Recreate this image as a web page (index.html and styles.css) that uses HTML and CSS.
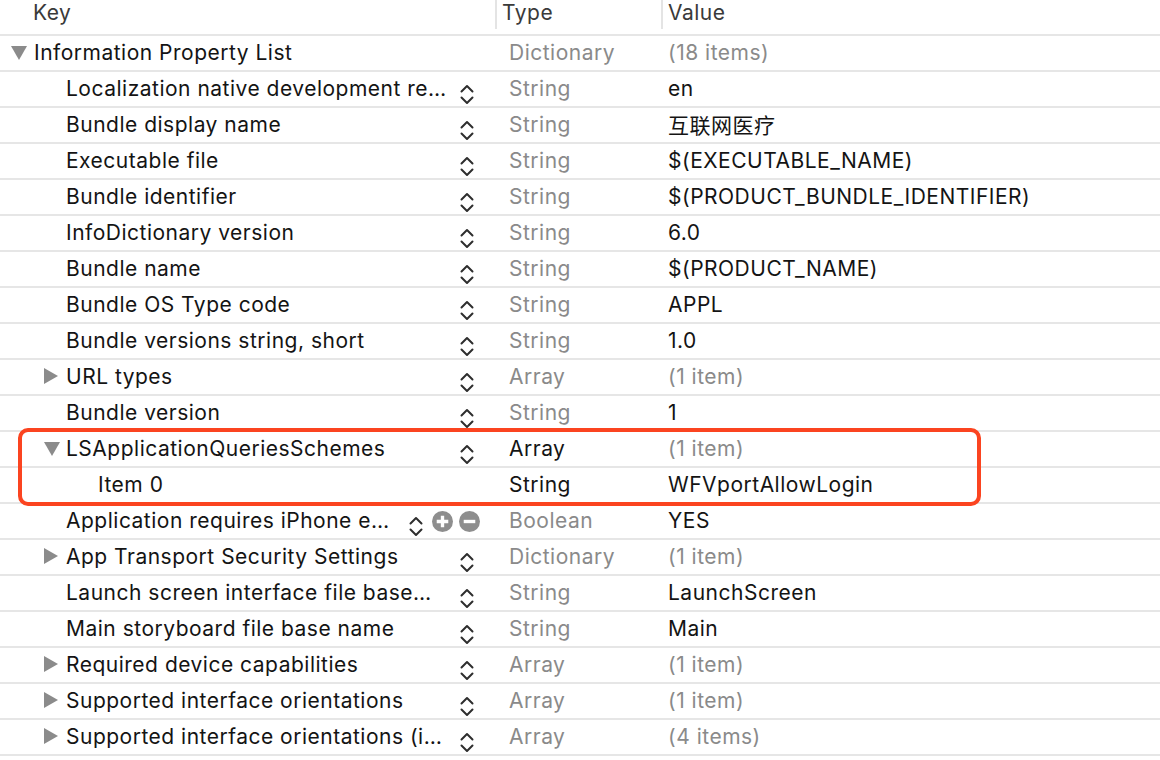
FILE: index.html
```html
<!DOCTYPE html>
<html>
<head>
<meta charset="utf-8">
<link rel="stylesheet" href="styles.css">
</head>
<body>
<div class="plist">
  <div class="row head">
    <div class="c key"><span class="htext hk">Key</span></div>
    <div class="c type"><span class="htext ht">Type</span></div>
    <div class="c value"><span class="htext hv">Value</span></div>
  </div>

  <div class="row">
    <div class="c key d0"><span class="tri down"></span><span class="k">Information Property List</span></div>
    <div class="c type">Dictionary</div>
    <div class="c value dim">(18 items)</div>
  </div>

  <div class="row">
    <div class="c key d1"><span class="k">Localization native development re…</span><svg class="step" viewBox="0 0 14 22"><path d="M1.5 8.5 7 3l5.5 5.5M1.5 14.5 7 20l5.5-5.5"/></svg></div>
    <div class="c type">String</div>
    <div class="c value">en</div>
  </div>
  <div class="row">
    <div class="c key d1"><span class="k">Bundle display name</span><svg class="step" viewBox="0 0 14 22"><path d="M1.5 8.5 7 3l5.5 5.5M1.5 14.5 7 20l5.5-5.5"/></svg></div>
    <div class="c type">String</div>
    <div class="c value">互联网医疗</div>
  </div>
  <div class="row">
    <div class="c key d1"><span class="k">Executable file</span><svg class="step" viewBox="0 0 14 22"><path d="M1.5 8.5 7 3l5.5 5.5M1.5 14.5 7 20l5.5-5.5"/></svg></div>
    <div class="c type">String</div>
    <div class="c value">$(EXECUTABLE_NAME)</div>
  </div>
  <div class="row">
    <div class="c key d1"><span class="k">Bundle identifier</span><svg class="step" viewBox="0 0 14 22"><path d="M1.5 8.5 7 3l5.5 5.5M1.5 14.5 7 20l5.5-5.5"/></svg></div>
    <div class="c type">String</div>
    <div class="c value">$(PRODUCT_BUNDLE_IDENTIFIER)</div>
  </div>
  <div class="row">
    <div class="c key d1"><span class="k">InfoDictionary version</span><svg class="step" viewBox="0 0 14 22"><path d="M1.5 8.5 7 3l5.5 5.5M1.5 14.5 7 20l5.5-5.5"/></svg></div>
    <div class="c type">String</div>
    <div class="c value">6.0</div>
  </div>
  <div class="row">
    <div class="c key d1"><span class="k">Bundle name</span><svg class="step" viewBox="0 0 14 22"><path d="M1.5 8.5 7 3l5.5 5.5M1.5 14.5 7 20l5.5-5.5"/></svg></div>
    <div class="c type">String</div>
    <div class="c value">$(PRODUCT_NAME)</div>
  </div>
  <div class="row">
    <div class="c key d1"><span class="k">Bundle OS Type code</span><svg class="step" viewBox="0 0 14 22"><path d="M1.5 8.5 7 3l5.5 5.5M1.5 14.5 7 20l5.5-5.5"/></svg></div>
    <div class="c type">String</div>
    <div class="c value">APPL</div>
  </div>
  <div class="row">
    <div class="c key d1"><span class="k">Bundle versions string, short</span><svg class="step" viewBox="0 0 14 22"><path d="M1.5 8.5 7 3l5.5 5.5M1.5 14.5 7 20l5.5-5.5"/></svg></div>
    <div class="c type">String</div>
    <div class="c value">1.0</div>
  </div>
  <div class="row">
    <div class="c key d1"><span class="tri right"></span><span class="k">URL types</span><svg class="step" viewBox="0 0 14 22"><path d="M1.5 8.5 7 3l5.5 5.5M1.5 14.5 7 20l5.5-5.5"/></svg></div>
    <div class="c type">Array</div>
    <div class="c value dim">(1 item)</div>
  </div>
  <div class="row">
    <div class="c key d1"><span class="k">Bundle version</span><svg class="step" viewBox="0 0 14 22"><path d="M1.5 8.5 7 3l5.5 5.5M1.5 14.5 7 20l5.5-5.5"/></svg></div>
    <div class="c type">String</div>
    <div class="c value">1</div>
  </div>

  <div class="group">
    <div class="row">
      <div class="c key d1"><span class="tri down"></span><span class="k">LSApplicationQueriesSchemes</span><svg class="step" viewBox="0 0 14 22"><path d="M1.5 8.5 7 3l5.5 5.5M1.5 14.5 7 20l5.5-5.5"/></svg></div>
      <div class="c type strong">Array</div>
      <div class="c value dim">(1 item)</div>
    </div>
    <div class="row">
      <div class="c key d2"><span class="k">Item 0</span></div>
      <div class="c type strong">String</div>
      <div class="c value">WFVportAllowLogin</div>
    </div>
    <div class="mark"></div>
  </div>

  <div class="row">
    <div class="c key d1"><span class="k">Application requires iPhone e…</span><svg class="step tight" viewBox="0 0 14 22"><path d="M1.5 8.5 7 3l5.5 5.5M1.5 14.5 7 20l5.5-5.5"/></svg><svg class="btn" width="21" height="21" viewBox="0 0 20 20"><circle cx="10" cy="10" r="10"/><path d="M10 4.5v11M4.5 10h11"/></svg><svg class="btn last" width="21" height="21" viewBox="0 0 20 20"><circle cx="10" cy="10" r="10"/><path d="M4.5 10h11"/></svg></div>
    <div class="c type">Boolean</div>
    <div class="c value">YES</div>
  </div>
  <div class="row">
    <div class="c key d1"><span class="tri right"></span><span class="k">App Transport Security Settings</span><svg class="step" viewBox="0 0 14 22"><path d="M1.5 8.5 7 3l5.5 5.5M1.5 14.5 7 20l5.5-5.5"/></svg></div>
    <div class="c type">Dictionary</div>
    <div class="c value dim">(1 item)</div>
  </div>
  <div class="row">
    <div class="c key d1"><span class="k">Launch screen interface file base…</span><svg class="step" viewBox="0 0 14 22"><path d="M1.5 8.5 7 3l5.5 5.5M1.5 14.5 7 20l5.5-5.5"/></svg></div>
    <div class="c type">String</div>
    <div class="c value">LaunchScreen</div>
  </div>
  <div class="row">
    <div class="c key d1"><span class="k">Main storyboard file base name</span><svg class="step" viewBox="0 0 14 22"><path d="M1.5 8.5 7 3l5.5 5.5M1.5 14.5 7 20l5.5-5.5"/></svg></div>
    <div class="c type">String</div>
    <div class="c value">Main</div>
  </div>
  <div class="row">
    <div class="c key d1"><span class="tri right"></span><span class="k">Required device capabilities</span><svg class="step" viewBox="0 0 14 22"><path d="M1.5 8.5 7 3l5.5 5.5M1.5 14.5 7 20l5.5-5.5"/></svg></div>
    <div class="c type">Array</div>
    <div class="c value dim">(1 item)</div>
  </div>
  <div class="row">
    <div class="c key d1"><span class="tri right"></span><span class="k">Supported interface orientations</span><svg class="step" viewBox="0 0 14 22"><path d="M1.5 8.5 7 3l5.5 5.5M1.5 14.5 7 20l5.5-5.5"/></svg></div>
    <div class="c type">Array</div>
    <div class="c value dim">(1 item)</div>
  </div>
  <div class="row">
    <div class="c key d1"><span class="tri right"></span><span class="k">Supported interface orientations (i…</span><svg class="step" viewBox="0 0 14 22"><path d="M1.5 8.5 7 3l5.5 5.5M1.5 14.5 7 20l5.5-5.5"/></svg></div>
    <div class="c type">Array</div>
    <div class="c value dim">(4 items)</div>
  </div>
</div>
</body>
</html>
```

FILE: styles.css
```css
html, body {
  margin: 0;
  padding: 0;
  background: #ffffff;
}
body {
  font-family: Inter, "Noto Sans CJK SC", "Noto Sans", sans-serif;
  font-size: 21px;
  letter-spacing: 0.5px;
  color: #141414;
  width: 1160px;
  height: 760px;
  overflow: hidden;
}
.plist {
  display: flex;
  flex-direction: column;
}
.row {
  display: grid;
  grid-template-columns: 495px 166px 1fr;
  height: 34px;
  border-bottom: 2px solid #e6e6e6;
  align-items: center;
}
.head {
  height: 34px;
  align-items: start;
}
.head .c {
  height: 29px;
  display: flex;
  align-items: center;
  padding-left: 0;
  padding-bottom: 0;
  overflow: visible;
}
.head .type, .head .value {
  border-left: 2px solid #e4e4e4;
}
.htext {
  color: #3a3a3a;
  line-height: 24px;
  margin-top: -4px;
}
.hk { padding-left: 33px; }
.ht { padding-left: 5px; }
.hv { padding-left: 5px; }
.c {
  white-space: nowrap;
  overflow: hidden;
  padding-bottom: 2px;
}
.key {
  display: flex;
  align-items: center;
  height: 34px;
  box-sizing: border-box;
}
.d0 { padding-left: 11px; }
.d1 { padding-left: 44px; }
.d2 { padding-left: 98px; }
.k { flex: 1; }
.d1 > .k:first-child { padding-left: 22px; }
.tri {
  width: 0;
  height: 0;
  flex: none;
}
.tri.down {
  border-left: 8px solid transparent;
  border-right: 8px solid transparent;
  border-top: 14px solid #8b8b8b;
  margin-right: 7px;
  margin-top: 2px;
}
.d1 .tri.down { margin-right: 6px; }
.tri.right {
  border-top: 8px solid transparent;
  border-bottom: 8px solid transparent;
  border-left: 14px solid #8b8b8b;
  margin-right: 8px;
}
.step {
  width: 14px;
  height: 22px;
  flex: none;
  margin-right: 21px;
  margin-top: 12px;
  fill: none;
  stroke: #2e2e2e;
  stroke-width: 2;
  stroke-linecap: round;
  stroke-linejoin: round;
}
.step.tight { margin-right: 9px; }
.btn {
  width: 21px;
  height: 21px;
  flex: 0 0 21px;
  margin-right: 6px;
  margin-top: 3px;
}
.btn circle { fill: #8e8e8e; }
.btn path {
  fill: none;
  stroke: #ffffff;
  stroke-width: 3.2;
}
.btn.last { margin-right: 15px; }
.type {
  padding-left: 14px;
  color: #8a8a8a;
}
.type.strong { color: #141414; }
.value {
  padding-left: 7px;
  color: #141414;
}
.value.dim { color: #8a8a8a; }
.group {
  position: relative;
}
.mark {
  position: absolute;
  left: 18px;
  top: -4px;
  width: 955px;
  height: 70px;
  border: 4px solid #fb4420;
  border-radius: 10px;
  pointer-events: none;
}
```
